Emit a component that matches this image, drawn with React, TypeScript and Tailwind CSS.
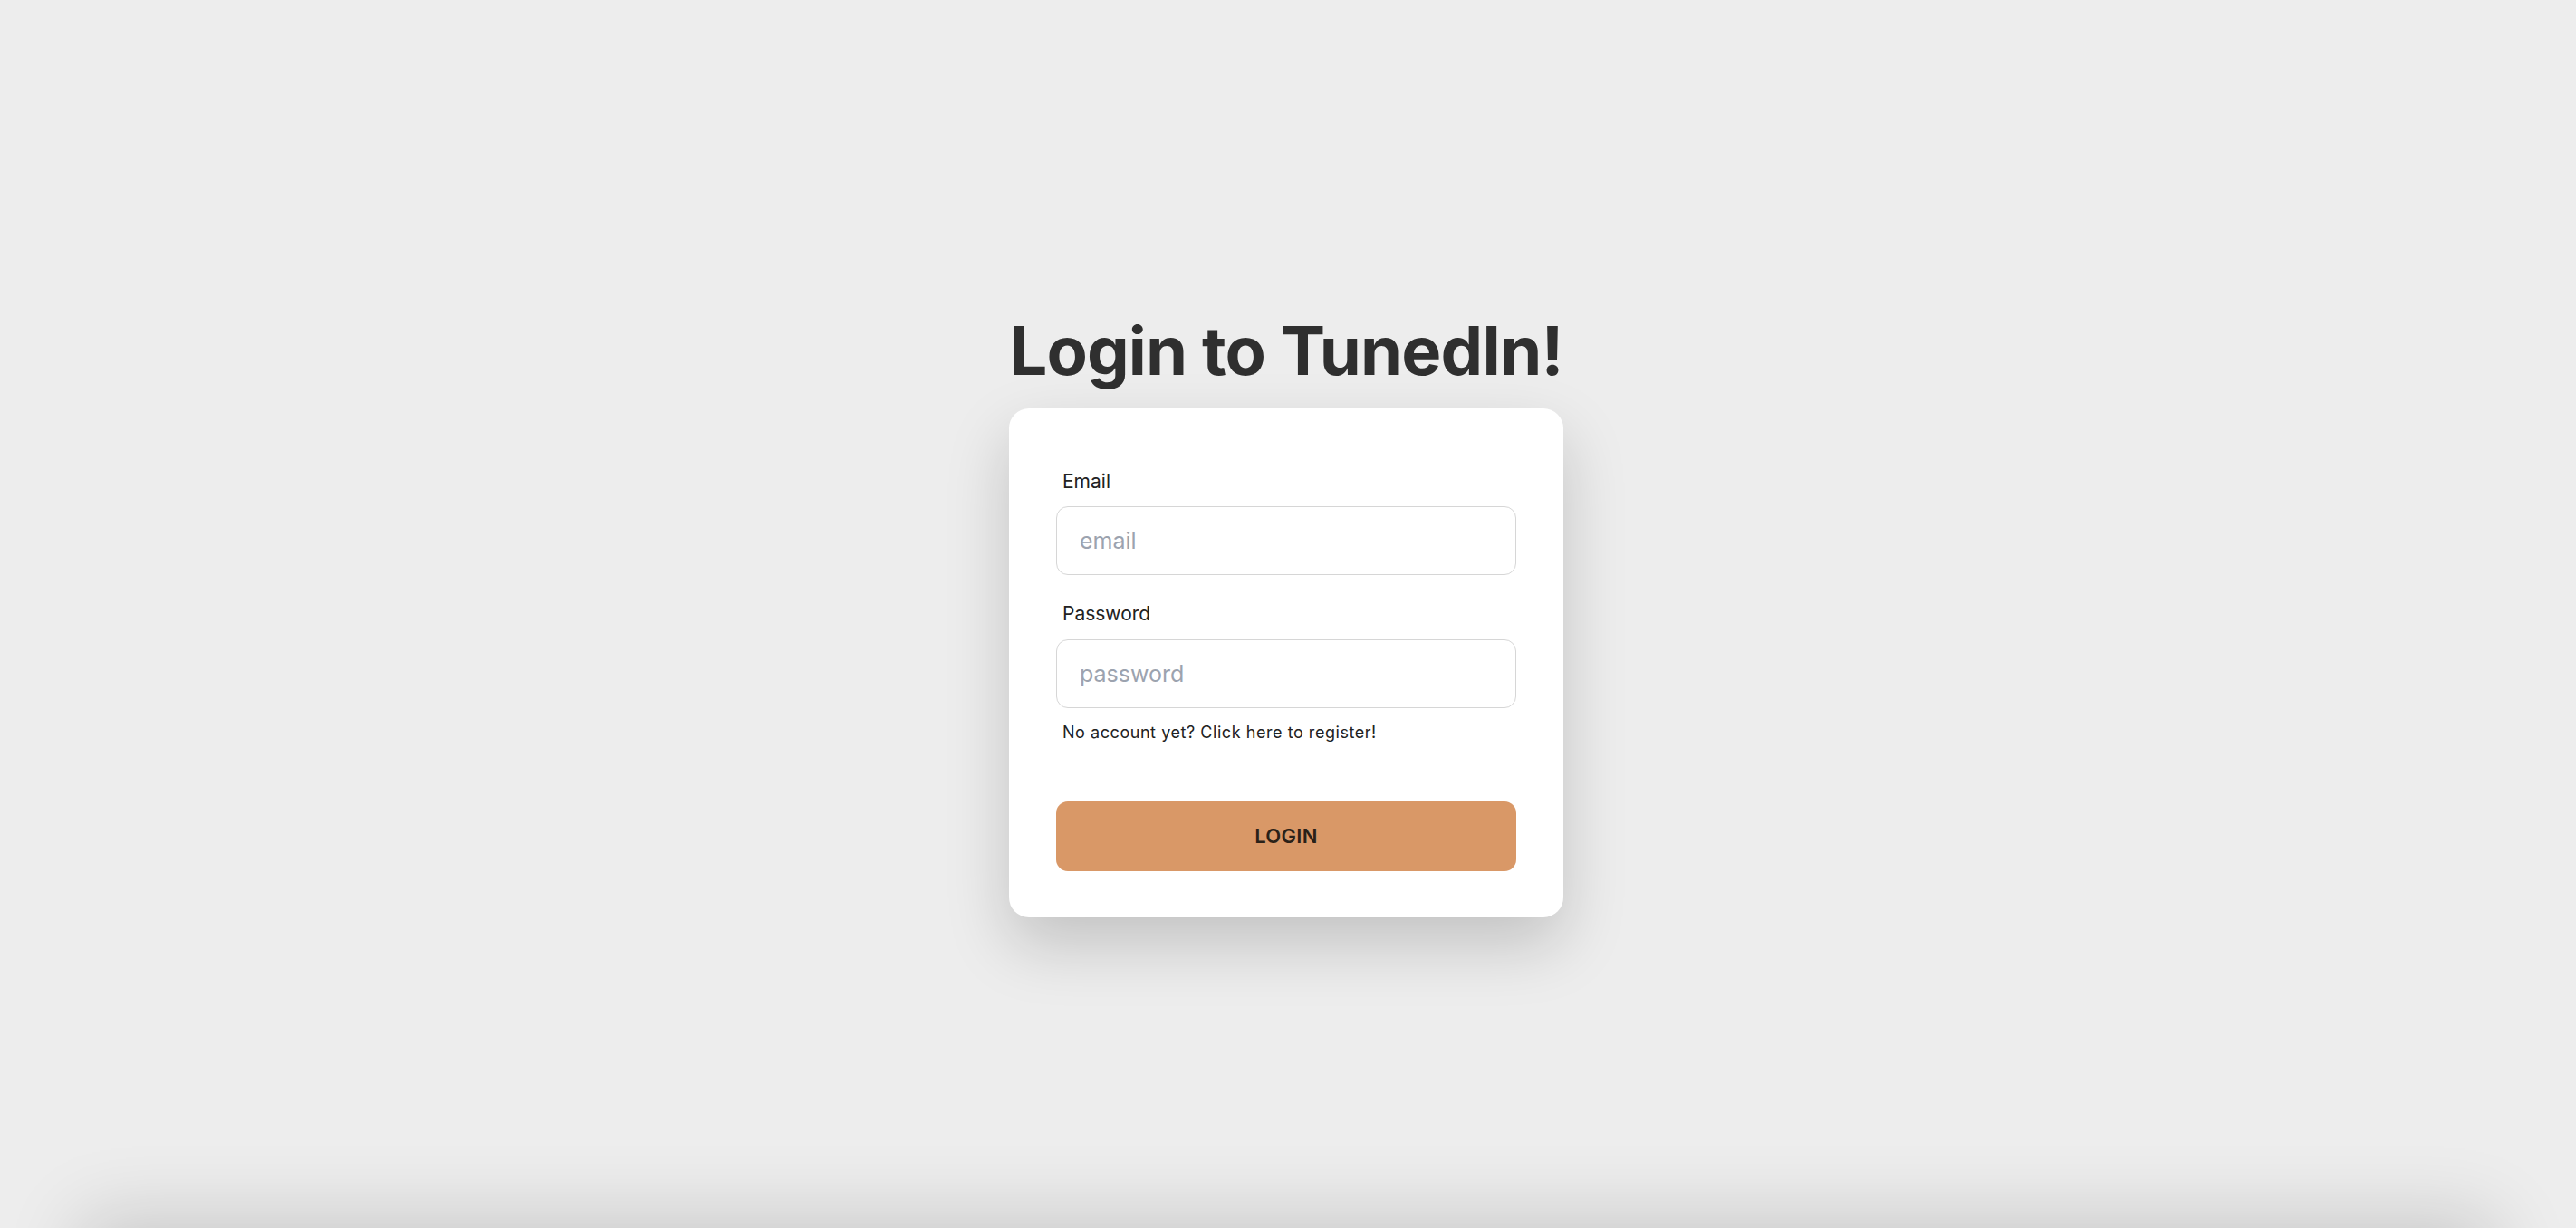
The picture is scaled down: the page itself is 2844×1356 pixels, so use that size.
export default function App() {
  return (
    <div className="min-h-screen bg-[#ededed] font-['Inter',sans-serif]">
      <div className="h-screen flex flex-col items-center justify-center pt-[6px] pr-[4px]">
        <h1 className="text-[74px] leading-[74px] font-bold text-[#2f2f2f] tracking-[-0.85px]">
          Login to TunedIn!
        </h1>
        <div className="mt-[27px] w-[612px] bg-white rounded-[22px] shadow-[0_30px_70px_rgba(0,0,0,0.18)] px-[52px] pt-[66px] pb-[51px]">
          <label className="block pl-[7px] text-[21px] leading-[30px] text-[#222222]">Email</label>
          <input
            className="mt-[12px] block w-full h-[76px] rounded-[13px] border border-[#d6d6d6] bg-white px-[25px] text-[25px] text-[#222222] placeholder:text-[#9ca3af] outline-none"
            placeholder="email"
          />
          <label className="mt-[28px] block pl-[7px] text-[21px] leading-[30px] text-[#222222]">Password</label>
          <input
            type="password"
            className="mt-[13px] block w-full h-[76px] rounded-[13px] border border-[#d6d6d6] bg-white px-[25px] text-[25px] text-[#222222] placeholder:text-[#9ca3af] outline-none"
            placeholder="password"
          />
          <p className="mt-[13px] pl-[7px] text-[18px] leading-[27px] tracking-[0.55px] text-[#222222]">
            No account yet? Click here to register!
          </p>
          <button className="mt-[63px] block w-full h-[77px] rounded-[13px] bg-[#d99867] text-[22px] font-semibold tracking-[0.3px] text-[#2a2118]">
            LOGIN
          </button>
        </div>
      </div>
      <div className="mx-[90px] h-[300px] bg-[#ededed] shadow-[0_-10px_80px_rgba(0,0,0,0.16)]" />
    </div>
  );
}
